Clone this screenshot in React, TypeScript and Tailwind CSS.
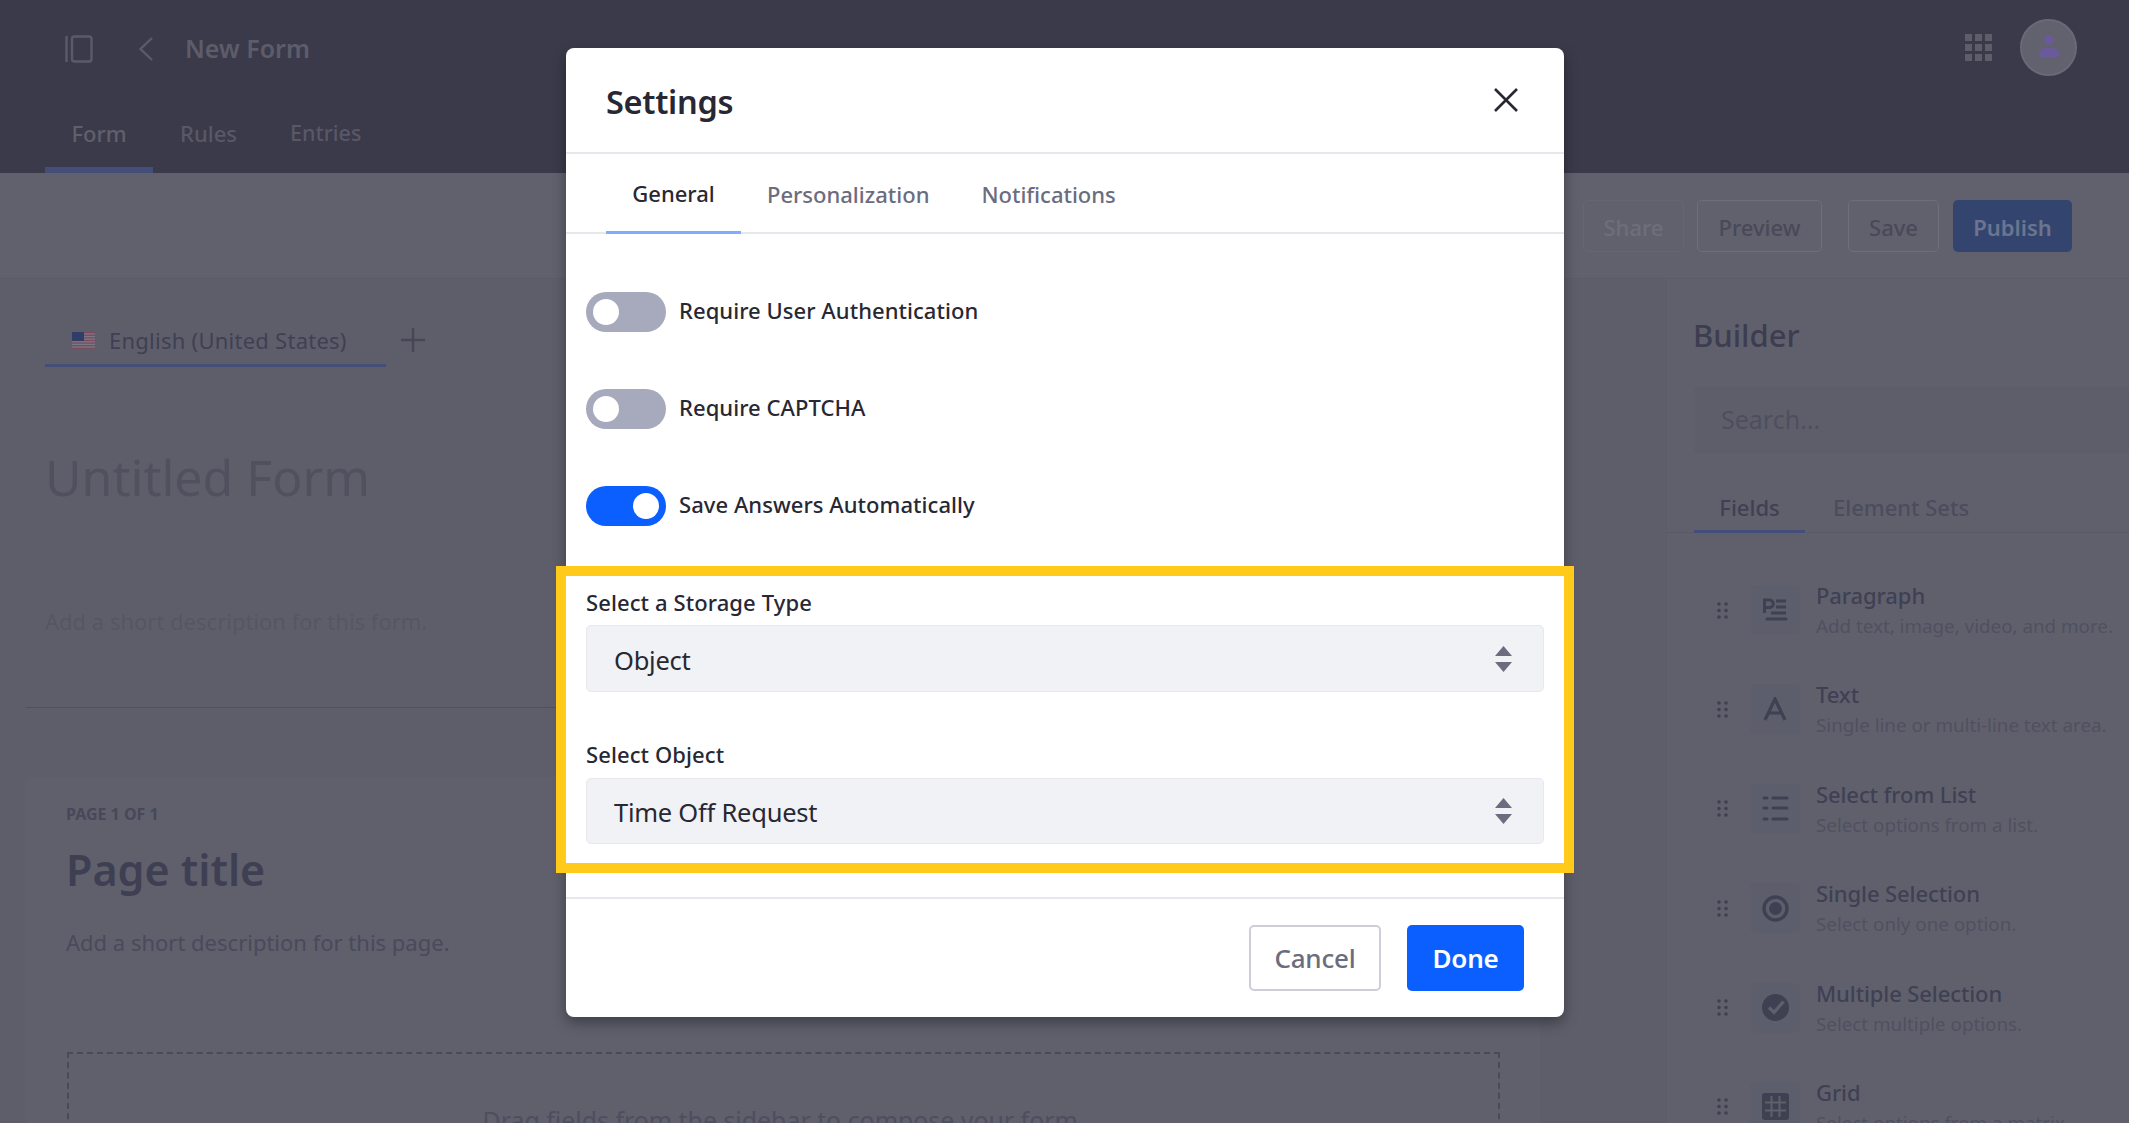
const font = "font-['Noto_Sans','Open_Sans',sans-serif]";

function Flag() {
  const stripes = [0, 1, 2, 3, 4, 5, 6];
  return (
    <svg width="23" height="17" viewBox="0 0 23 17" className="shrink-0">
      <rect width="23" height="17" fill="#7a7a86" />
      {stripes.map((i) => (
        <rect key={i} y={i * 2.6} width="23" height="1.3" fill="#7b4a5e" />
      ))}
      <rect width="12" height="9" fill="#2f3d68" />
    </svg>
  );
}

function ParagraphIcon() {
  return (
    <svg width="26" height="24" viewBox="0 0 26 24" fill="none" stroke="#3f4052" strokeWidth="3">
      <path d="M2.5 15V2h5a3.8 3.8 0 0 1 0 7.6h-5" />
      <path d="M14 3h10M14 9h10M9 15h15" />
      <path d="M5 21h19" strokeLinecap="round" />
    </svg>
  );
}
function TextIcon() {
  return (
    <svg width="24" height="24" viewBox="0 0 24 24" fill="none" stroke="#3f4052" strokeWidth="3.2">
      <path d="M2 23 12 2l10 21M6 16h12" />
    </svg>
  );
}
function ListIcon() {
  return (
    <svg width="27" height="27" viewBox="0 0 27 27" fill="none" stroke="#3f4052" strokeWidth="3" strokeLinecap="round">
      <path d="M2 3h3M2 13h3M2 24h3M11 3h14M11 13h14M11 24h14" />
    </svg>
  );
}
function RadioIcon() {
  return (
    <svg width="27" height="27" viewBox="0 0 27 27">
      <circle cx="13.5" cy="13.5" r="11.5" fill="none" stroke="#3f4052" strokeWidth="3.4" />
      <circle cx="13.5" cy="13.5" r="6.5" fill="#3f4052" />
    </svg>
  );
}
function CheckIcon() {
  return (
    <svg width="27" height="27" viewBox="0 0 27 27">
      <circle cx="13.5" cy="13.5" r="13.5" fill="#3f4052" />
      <path d="M7 13.5l5 5 9.5-11" fill="none" stroke="#60606c" strokeWidth="3.2" />
    </svg>
  );
}
function GridIcon() {
  return (
    <svg width="27" height="27" viewBox="0 0 27 27">
      <rect width="27" height="27" rx="3" fill="#3f4052" />
      <path d="M9.5 3v21M17.5 3v21M3 9.5h21M3 17.5h21" stroke="#60606c" strokeWidth="2" />
    </svg>
  );
}

const fields = [
  { t: "Paragraph", d: "Add text, image, video, and more.", i: <ParagraphIcon /> },
  { t: "Text", d: "Single line or multi-line text area.", i: <TextIcon /> },
  { t: "Select from List", d: "Select options from a list.", i: <ListIcon /> },
  { t: "Single Selection", d: "Select only one option.", i: <RadioIcon /> },
  { t: "Multiple Selection", d: "Select multiple options.", i: <CheckIcon /> },
  { t: "Grid", d: "Select options from a matrix.", i: <GridIcon /> },
];

function DragDots() {
  const c = [0, 1, 2];
  return (
    <svg width="11" height="17" viewBox="0 0 11 17" className="shrink-0">
      {c.map((r) => (
        <g key={r} fill="#3f4052">
          <circle cx="2" cy={2 + r * 6.5} r="1.8" />
          <circle cx="9" cy={2 + r * 6.5} r="1.8" />
        </g>
      ))}
    </svg>
  );
}

function Toggle({ on, label }: { on?: boolean; label: string }) {
  return (
    <div className="flex items-center h-[40px]">
      <div className={`relative w-[80px] h-[40px] rounded-[20px] shrink-0 ${on ? "bg-[#0b5fff]" : "bg-[#a7a9bc]"}`}>
        <div className={`absolute top-[7px] w-[26px] h-[26px] rounded-full bg-white ${on ? "right-[7px]" : "left-[7px]"}`} />
      </div>
      <span className="ml-[13px] -mt-[5px] text-[22px] leading-none font-medium text-[#272833] tracking-[0.05px]">{label}</span>
    </div>
  );
}

function Select({ label, value, className, boxClass }: { label: string; value: string; className?: string; boxClass: string }) {
  return (
    <div className={className}>
      <div className="text-[22px] leading-[30px] font-medium text-[#272833] tracking-[0.1px]">{label}</div>
      <div className={`${boxClass} rounded-[5px] bg-[#f1f2f5] border border-[#e7e7ed] flex items-center justify-between pl-[27px] pr-[31px]`}>
        <span className="pt-[3px] text-[25.5px] text-[#272833] tracking-[-0.25px]">{value}</span>
        <svg width="17" height="26" viewBox="0 0 17 26" fill="#6b6c7e">
          <path d="M8.5 0 17 10H0z" />
          <path d="M0 16h17L8.5 26z" />
        </svg>
      </div>
    </div>
  );
}

export default function App() {
  return (
    <div className={`relative h-[1123px] overflow-hidden bg-[#5e5e6b] flex flex-col ${font}`}>
      {/* header */}
      <header className="h-[173px] shrink-0 bg-[#3a3a4a] flex flex-col">
        <div className="h-[97px] flex items-center pl-[65px] pr-[52px]">
          <svg width="28" height="28" viewBox="0 0 28 28" fill="none" stroke="#5b5b68" strokeWidth="2.4" className="shrink-0">
            <path d="M1.5 1v26" />
            <rect x="7" y="1.5" width="19.5" height="25" rx="2.5" />
          </svg>
          <svg width="16" height="24" viewBox="0 0 16 24" fill="none" stroke="#5b5b68" strokeWidth="2.4" className="ml-[45px] shrink-0">
            <path d="M14 1 2.5 12 14 23" />
          </svg>
          <span className="ml-[31px] text-[25px] font-semibold text-[#5d5d6a]">New Form</span>
          <svg width="27" height="27" viewBox="0 0 27 27" fill="#5e5e6a" className="ml-auto shrink-0 -mt-[3px]">
            <rect width="7" height="7" /><rect x="10" width="7" height="7" /><rect x="20" width="7" height="7" />
            <rect y="10" width="7" height="7" /><rect x="10" y="10" width="7" height="7" /><rect x="20" y="10" width="7" height="7" />
            <rect y="20" width="7" height="7" /><rect x="10" y="20" width="7" height="7" /><rect x="20" y="20" width="7" height="7" />
          </svg>
          <div className="ml-[28px] -mt-[3px] w-[57px] h-[57px] rounded-full bg-[#62626e] border-2 border-[#6a6a76] flex items-center justify-center">
            <svg width="20" height="24" viewBox="0 0 20 24" fill="#6b5a9a">
              <circle cx="10" cy="5" r="5" />
              <path d="M0 19c0-4 3-6 6-6h8c3 0 6 2 6 6 0 3-2 4-4 4H4c-2 0-4-1-4-4z" />
            </svg>
          </div>
        </div>
        <div className="flex-1 flex pl-[45px]">
          <div className="w-[108px] flex items-center justify-center border-b-[6px] border-[#434f78] text-[22px] font-medium text-[#60606d] pt-[3px]">Form</div>
          <div className="px-[27px] flex items-center justify-center border-b-[6px] border-transparent text-[22px] font-medium text-[#585866] pt-[3px]">Rules</div>
          <div className="px-[26px] flex items-center justify-center border-b-[6px] border-transparent text-[21.5px] font-medium text-[#585866] pt-[3px]">Entries</div>
        </div>
      </header>

      {/* toolbar */}
      <div className="h-[106px] shrink-0 bg-[#61616d] border-b border-[#5c5c69] flex items-center justify-end pr-[57px]">
        <div className="w-[101px] h-[52px] pt-[3px] rounded-[5px] border border-[#666672] flex items-center justify-center text-[22px] font-medium text-[#6e6e7a]">Share</div>
        <div className="ml-[13px] w-[125px] h-[52px] pt-[3px] rounded-[5px] border border-[#6f6f7b] flex items-center justify-center text-[22px] font-medium text-[#484959]">Preview</div>
        <div className="ml-[26px] w-[91px] h-[52px] pt-[3px] rounded-[5px] border border-[#6f6f7b] flex items-center justify-center text-[22px] font-medium text-[#484959]">Save</div>
        <div className="ml-[14px] w-[119px] h-[52px] pt-[3px] rounded-[5px] bg-[#33456f] flex items-center justify-center text-[22px] font-semibold text-[#6b7590]">Publish</div>
      </div>

      {/* body */}
      <div className="flex-1 flex min-h-0">
        <main className="w-[1666px] shrink-0 pt-[49px] pl-[26px] pr-[126px]">
          <div className="flex items-center pl-[19px]">
            <div className="w-[341px] h-[39px] border-b-[3px] border-[#434f78] flex items-center pl-[27px] pb-[11px]">
              <Flag />
              <span className="ml-[14px] text-[22px] tracking-[0.25px] text-[#3f4054]">English (United States)</span>
            </div>
            <svg width="24" height="24" viewBox="0 0 24 24" stroke="#454656" strokeWidth="2.4" className="ml-[15px] -mt-[15px]">
              <path d="M12 0v24M0 12h24" />
            </svg>
          </div>
          <h1 className="mt-[75px] pl-[19px] text-[50px] leading-[70px] text-[#50515f]">Untitled Form</h1>
          <p className="mt-[94px] pl-[19px] text-[22px] leading-[30px] text-[#555664]">Add a short description for this form.</p>
          <div className="mt-[71px] border-t border-[#50515f]" />
          <section className="mt-[69px] bg-[#5f606c] rounded-t-[5px] px-[40px] pt-[24px] h-[400px]">
            <div className="text-[16px] leading-[26px] font-bold text-[#474859]">PAGE 1 OF 1</div>
            <h2 className="mt-[15px] text-[43px] leading-[56px] font-semibold text-[#3e3f52]">Page title</h2>
            <p className="mt-[29px] text-[22px] leading-[30px] text-[#494a5b]">Add a short description for this page.</p>
            <div className="mt-[95px] ml-[1px] h-[200px] border-2 border-dashed border-[#484959] flex justify-center pt-[51px]">
              <span className="text-[24.9px] leading-[30px] text-[#4d4e5f]">Drag fields from the sidebar to compose your form.</span>
            </div>
          </section>
        </main>

        <aside className="flex-1 bg-[#60606c] border-l border-[#5c5c69] flex flex-col min-w-0 overflow-hidden">
          <h2 className="mt-[35px] ml-[26px] shrink-0 text-[31px] leading-[42px] font-medium text-[#3c3d50]">Builder</h2>
          <div className="mt-[31px] ml-[27px] h-[66px] shrink-0 rounded-l-[5px] bg-[#5e5e6b] flex items-center pl-[27px] text-[25px] text-[#4d4e5f]">Search...</div>
          <div className="mt-[28px] h-[52px] border-b border-[#5a5a67] flex pl-[27px] shrink-0">
            <div className="w-[111px] h-[52px] pt-[3px] border-b-[3px] border-[#434f78] flex items-center justify-center text-[22px] font-medium text-[#3f4054]">Fields</div>
            <div className="ml-[28px] pt-[3px] flex items-center text-[22px] font-medium text-[#4b4c5d] h-[49px]">Element Sets</div>
          </div>
          <div className="mt-[47px] flex flex-col gap-[32.4px] shrink-0">
            {fields.map((f) => (
              <div key={f.t} className="flex h-[67px] items-start pl-[50px]">
                <div className="h-[50px] flex items-center mt-[5px]"><DragDots /></div>
                <div className="ml-[22px] mt-[5px] w-[50px] h-[50px] rounded-[5px] bg-[#5d5e6c] flex items-center justify-center shrink-0">{f.i}</div>
                <div className="ml-[16px] whitespace-nowrap">
                  <div className="text-[22px] leading-[30px] font-medium text-[#3f4054] tracking-[-0.1px]">{f.t}</div>
                  <div className="text-[18.8px] leading-[32px] text-[#4f5060]">{f.d}</div>
                </div>
              </div>
            ))}
          </div>
        </aside>
      </div>

      {/* modal */}
      <div className="absolute left-[566px] top-[48px] w-[998px] h-[969px] bg-white rounded-[8px] shadow-[0_6px_14px_rgba(0,0,0,0.35)] flex flex-col">
        <div className="h-[106px] shrink-0 border-b-2 border-[#e7e7ed] flex items-center justify-between pl-[40px] pr-[46px]">
          <h3 className="pt-[5px] text-[32.5px] font-semibold text-[#272833] tracking-[-0.3px]">Settings</h3>
          <svg width="24" height="24" viewBox="0 0 24 24" stroke="#272833" strokeWidth="2.6" className="mt-[0px]">
            <path d="M1 1l22 22M23 1 1 23" />
          </svg>
        </div>
        <div className="h-[80px] shrink-0 border-b-2 border-[#e7e7ed] flex pl-[40px] text-[22px]">
          <div className="w-[135px] h-[80px] pt-[2px] border-b-[3px] border-[#80acff] flex items-center justify-center font-medium text-[#272833]">General</div>
          <div className="px-[26px] pt-[2px] flex items-center justify-center font-medium text-[#6b6c7e]">Personalization</div>
          <div className="px-[26px] pt-[2px] flex items-center justify-center font-medium text-[#6b6c7e]">Notifications</div>
        </div>
        <div className="flex-1 pt-[58px] px-[20px]">
          <div className="flex flex-col gap-[57px]">
            <Toggle label="Require User Authentication" />
            <Toggle label="Require CAPTCHA" />
            <Toggle on label="Save Answers Automatically" />
          </div>
          <Select label="Select a Storage Type" value="Object" className="mt-[61px]" boxClass="mt-[8px] h-[67px]" />
          <Select label="Select Object" value="Time Off Request" className="mt-[47px]" boxClass="mt-[9px] h-[66px]" />
        </div>
        <div className="h-[120px] shrink-0 border-t-2 border-[#e7e7ed] flex items-start justify-end pt-[26px] pr-[40px]">
          <div className="w-[132px] h-[66px] rounded-[5px] border-2 border-[#cdced9] flex items-center justify-center text-[26px] font-medium text-[#6b6c7e] tracking-[-0.2px]">Cancel</div>
          <div className="ml-[26px] w-[117px] h-[66px] rounded-[5px] bg-[#0b5fff] flex items-center justify-center text-[26px] font-semibold text-white tracking-[-0.2px]">Done</div>
        </div>
        {/* highlight */}
        <div className="absolute left-[-10px] top-[518px] w-[1018px] h-[307px] border-[10px] border-[#ffca1a]" />
      </div>
    </div>
  );
}
